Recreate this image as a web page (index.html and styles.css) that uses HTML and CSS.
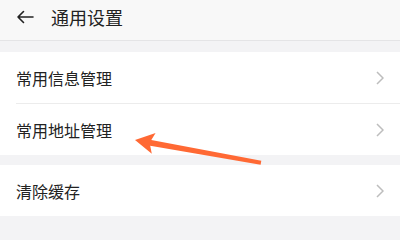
FILE: index.html
```html
<!DOCTYPE html>
<html lang="zh">
<head>
<meta charset="utf-8">
<link rel="stylesheet" href="styles.css">
</head>
<body>
<div class="page">
  <header class="header">
    <svg class="back" width="18" height="14" viewBox="0 0 18 14"><path d="M17 7H2M7.5 1.5L2 7l5.5 5.5" fill="none" stroke="#222" stroke-width="1.6" stroke-linecap="round" stroke-linejoin="round"/></svg>
    <span class="title">通用设置</span>
  </header>
  <div class="group g1">
    <div class="row"><span class="label">常用信息管理</span><svg class="chev" width="8" height="14" viewBox="0 0 8 14"><path d="M1 1l6 6-6 6" fill="none" stroke="#bdbdbd" stroke-width="1.5"/></svg></div>
    <div class="divider"></div>
    <div class="row"><span class="label">常用地址管理</span><svg class="chev" width="8" height="14" viewBox="0 0 8 14"><path d="M1 1l6 6-6 6" fill="none" stroke="#bdbdbd" stroke-width="1.5"/></svg></div>
  </div>
  <div class="group g2">
    <div class="row"><span class="label">清除缓存</span><svg class="chev" width="8" height="14" viewBox="0 0 8 14"><path d="M1 1l6 6-6 6" fill="none" stroke="#bdbdbd" stroke-width="1.5"/></svg></div>
  </div>
  <svg class="pointer" width="400" height="233" viewBox="0 0 400 233"><polygon points="135,140 155.6,133 151.3,139.9 261.3,160.8 260.6,164.8 150.2,145.8 151.8,153.7" fill="#ff6934"/></svg>
</div>
</body>
</html>
```
FILE: styles.css
```css
html, body { margin: 0; padding: 0; }
body {
  background: #f3f3f5;
  font-family: "Noto Sans CJK SC", "Noto Sans", sans-serif;
  color: #222;
}
.page { position: relative; width: 400px; height: 233px; overflow: hidden; }
.header {
  height: 40px;
  background: #f8f8f8;
  border-bottom: 1px solid #e4e4e6;
  display: flex;
  align-items: center;
  padding: 0 0 6px 16px;
  box-sizing: content-box;
  height: 34px;
  gap: 17px;
}
.back { display: block; }
.title { font-size: 18px; line-height: 20px; color: #222; }
.group { background: #fff; }
.g1 { margin-top: 11px; }
.g2 { margin-top: 10px; }
.row {
  height: 51px;
  display: flex;
  align-items: center;
  justify-content: space-between;
  padding: 0 16px;
}
.label { font-size: 16px; line-height: 20px; color: #222; }
.chev { display: block; margin-right: 0; }
.divider { height: 1px; background: #ececec; margin-left: 16px; }
.pointer { position: absolute; left: 0; top: 0; }
```
